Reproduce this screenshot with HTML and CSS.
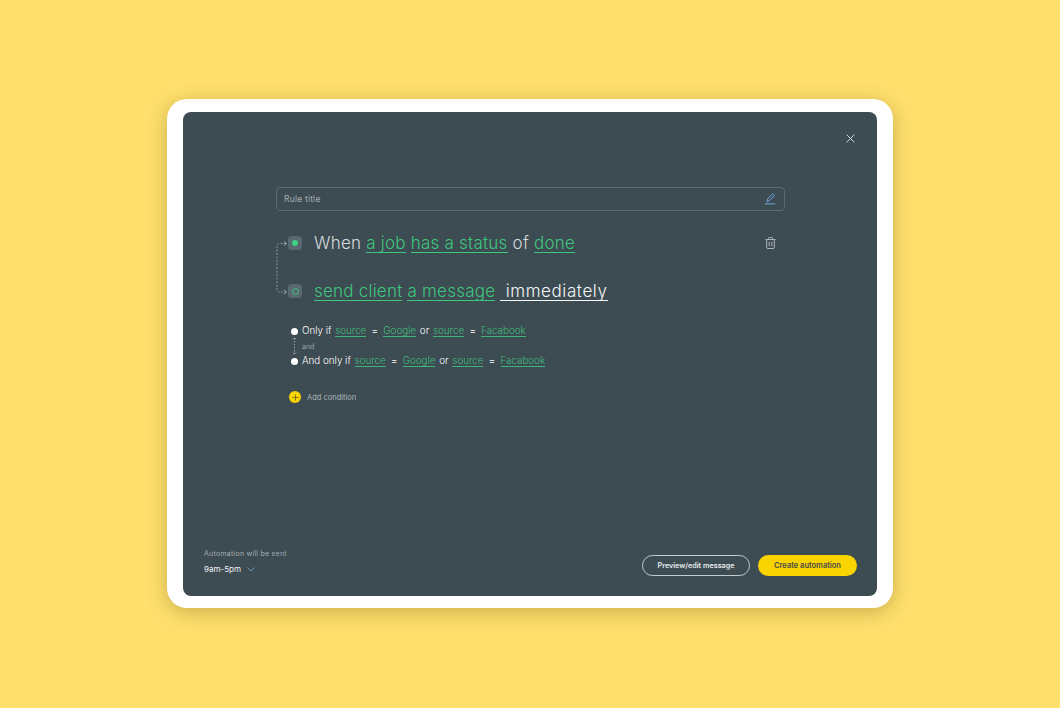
FILE: index.html
```html
<!DOCTYPE html>
<html lang="en">
<head>
<meta charset="utf-8">
<title>Create automation</title>
<link rel="stylesheet" href="styles.css">
</head>
<body>
<main class="card">
  <section class="panel">
    <header class="top">
      <button class="close" aria-label="Close">
        <svg width="9" height="9" viewBox="0 0 10 10"><path d="M.7.7l8.6 8.6M9.3.7L.7 9.3" stroke="#e4e9ea" stroke-width="1" fill="none"/></svg>
      </button>
    </header>
    <div class="content">
      <div class="title-field">
        <span class="placeholder">Rule title</span>
        <svg class="pen" width="12" height="12" viewBox="0 0 12 12"><path d="M3 8.400l.5-2.300L7.900 1.400c.5-.5 1.200-.5 1.700 0l.2.2c.5.5.5 1.200 0 1.700L5.300 7.800z M1 10.900h10" stroke="#74a8e0" stroke-width="1" fill="none"/></svg>
      </div>
      <div class="rules">
        <svg class="connector" width="12" height="50" viewBox="0 0 12 50"><path d="M10 .5H3.500Q1 .5 1 3V46.500Q1 49 3.500 49H10" stroke="#aab4b8" stroke-width=".7" stroke-dasharray="2 1.500" fill="none"/><path d="M8 -1.500L10.500 .5 8 2.500M8 47L10.500 49 8 51" stroke="#c3cbce" stroke-width=".7" fill="none"/></svg>
        <div class="rule">
          <span class="badge"><i class="dot"></i></span>
          <p class="sentence"><span>When</span> <a>a job</a> <a>has a status</a> <span>of</span> <a>done</a></p>
          <button class="trash" aria-label="Delete">
            <svg width="11" height="12" viewBox="0 0 11 12"><path d="M.5 2.500h10M3.500 2.500V1.300q0-.8.800-.8h2.400q.8 0 .8.800v1.200M1.700 2.500v7.700q0 1.300 1.300 1.300h5q1.300 0 1.300-1.300V2.500M4.200 4.800v4.500M6.800 4.800v4.500" stroke="#b8c0c4" stroke-width=".9" fill="none"/></svg>
          </button>
        </div>
        <div class="rule rule-second">
          <span class="badge"><i class="ring"></i></span>
          <p class="sentence"><a>send client</a> <a>a message</a> <a class="white">&nbsp;immediately</a></p>
        </div>
      </div>
      <div class="conditions">
        <div class="condition"><i class="bullet"></i><p>Only if <a>source</a> <b>=</b> <a>Google</a> or <a>source</a> <b>=</b> <a>Facabook</a></p></div>
        <div class="and">
          <svg width="5" height="18" viewBox="0 0 5 18"><path d="M2.500 1V17" stroke="#c3cbce" stroke-width=".7" stroke-dasharray="1.500 1.500"/><path d="M1 2.500L2.500 1 4 2.500M1 15.500L2.500 17 4 15.500" stroke="#c3cbce" stroke-width=".6" fill="none"/></svg>
          <span>and</span>
        </div>
        <div class="condition"><i class="bullet"></i><p>And only if <a>source</a> <b>=</b> <a>Google</a> or <a>source</a> <b>=</b> <a>Facabook</a></p></div>
      </div>
      <div class="add">
        <span class="plus"><svg width="7" height="7" viewBox="0 0 7 7"><path d="M3.500.5v6M.5 3.500h6" stroke="#7b6c10" stroke-width=".9"/></svg></span>
        <span>Add condition</span>
      </div>
    </div>
    <footer class="foot">
      <div class="schedule">
        <span class="schedule-label">Automation will be sent</span>
        <span class="schedule-value">9am-5pm
          <svg width="8" height="5" viewBox="0 0 8 5"><path d="M.5.500L4 4 7.500.500" stroke="#6f9fc0" stroke-width=".9" fill="none"/></svg>
        </span>
      </div>
      <div class="actions">
        <button class="btn btn-outline">Preview/edit message</button>
        <button class="btn btn-solid">Create automation</button>
      </div>
    </footer>
  </section>
</main>
</body>
</html>
```
FILE: styles.css
```css
* { box-sizing: border-box; }
html, body { height: 100%; }
body {
  margin: 0;
  height: 708px;
  overflow: hidden;
  background: #ffe06d;
  padding-top: 99px;
  font-family: "Inter", "Liberation Sans", sans-serif;
  color: #fff;
}
p { margin: 0; }
button { font: inherit; background: none; border: 0; padding: 0; color: inherit; display: flex; }
.card {
  width: 726px;
  height: 509px;
  margin: 0 auto;
  padding: 13px 16px 12px;
  background: #fff;
  border-radius: 20px;
  box-shadow: 0 4px 20px rgba(100, 80, 20, .35);
}
.panel {
  height: 484px;
  background: #3d4b52;
  border-radius: 8px;
  display: flex;
  flex-direction: column;
}
.top {
  display: flex;
  justify-content: flex-end;
  padding: 22px 22px 0 0;
  height: 75px;
}
.content { margin-left: 93px; width: 509px; flex: 1; }
.title-field {
  height: 24px;
  border: 1px solid #5c6b72;
  border-radius: 4px;
  display: flex;
  align-items: center;
  justify-content: space-between;
  padding: 0 8px 0 7px;
}
.placeholder { font-size: 8.500px; color: #a3adb2; letter-spacing: .2px; }
.rules { position: relative; margin-top: 20px; }
.connector { position: absolute; left: 0; top: 12px; overflow: visible; }
.rule { display: flex; align-items: center; height: 24px; padding-left: 12px; }
.rule-second { margin-top: 24px; }
.badge {
  width: 14px; height: 14px;
  border-radius: 4px;
  background: #58696f;
  display: flex; align-items: center; justify-content: center;
  flex: none;
}
.dot { width: 6px; height: 6px; border-radius: 50%; background: #3ecf7f; }
.ring { width: 7px; height: 7px; border-radius: 50%; border: 1px solid #3fc07f; }
.sentence {
  margin-left: 12px;
  font-size: 17px;
  font-weight: 300;
  letter-spacing: .22px;
  color: #d5dbdd;
  white-space: pre-wrap;
  flex: 1;
}
.sentence a {
  color: #3fc67d;
  border-bottom: 1px solid #3fc67d;
  line-height: 17px;
  display: inline-block;
}
.sentence a.white { color: #f4f6f7; border-color: #f4f6f7; letter-spacing: .6px; }
.trash { margin-right: 9px; }
.conditions { margin: 21px 0 0 15px; }
.condition { display: flex; align-items: center; height: 14px; gap: 4px; font-size: 9.800px; font-weight: 300; color: #fff; }
.condition p { white-space: nowrap; }
.condition a { color: #3fbc7b; border-bottom: 1px solid #3fb577; margin: 0 1px; display: inline-block; line-height: 10px; }
.condition b { font-weight: 400; margin: 0 1.500px; }
.bullet { width: 7px; height: 7px; border-radius: 50%; background: #fff; flex: none; }
.and { display: flex; align-items: center; height: 16px; padding-left: 1px; gap: 5px; font-size: 7px; color: #98a3a8; }
.add { display: flex; align-items: center; gap: 6px; margin: 23px 0 0 13px; font-size: 7.500px; color: #aeb7bb; }
.plus { width: 12px; height: 12px; border-radius: 50%; background: #fad400; display: flex; align-items: center; justify-content: center; }
.foot {
  display: flex;
  justify-content: space-between;
  align-items: flex-end;
  padding: 0 20px 20px 21px;
}
.schedule { display: flex; flex-direction: column; gap: 6px; }
.schedule-label { font-size: 7px; color: #a3adb2; letter-spacing: .25px; }
.schedule-value { font-size: 8px; color: #f2f4f5; display: flex; align-items: center; gap: 6px; margin-bottom: 2px; }
.actions { display: flex; gap: 8px; }
.btn {
  height: 21px;
  border-radius: 11px;
  font-size: 7.500px;
  font-weight: 600;
  align-items: center;
  justify-content: center;
}
.btn-outline { width: 108px; border: 1px solid #c3cbce; color: #e8ecee; font-size: 7.200px; }
.btn-solid { width: 99px; background: #fad400; color: #46494a; }
```
